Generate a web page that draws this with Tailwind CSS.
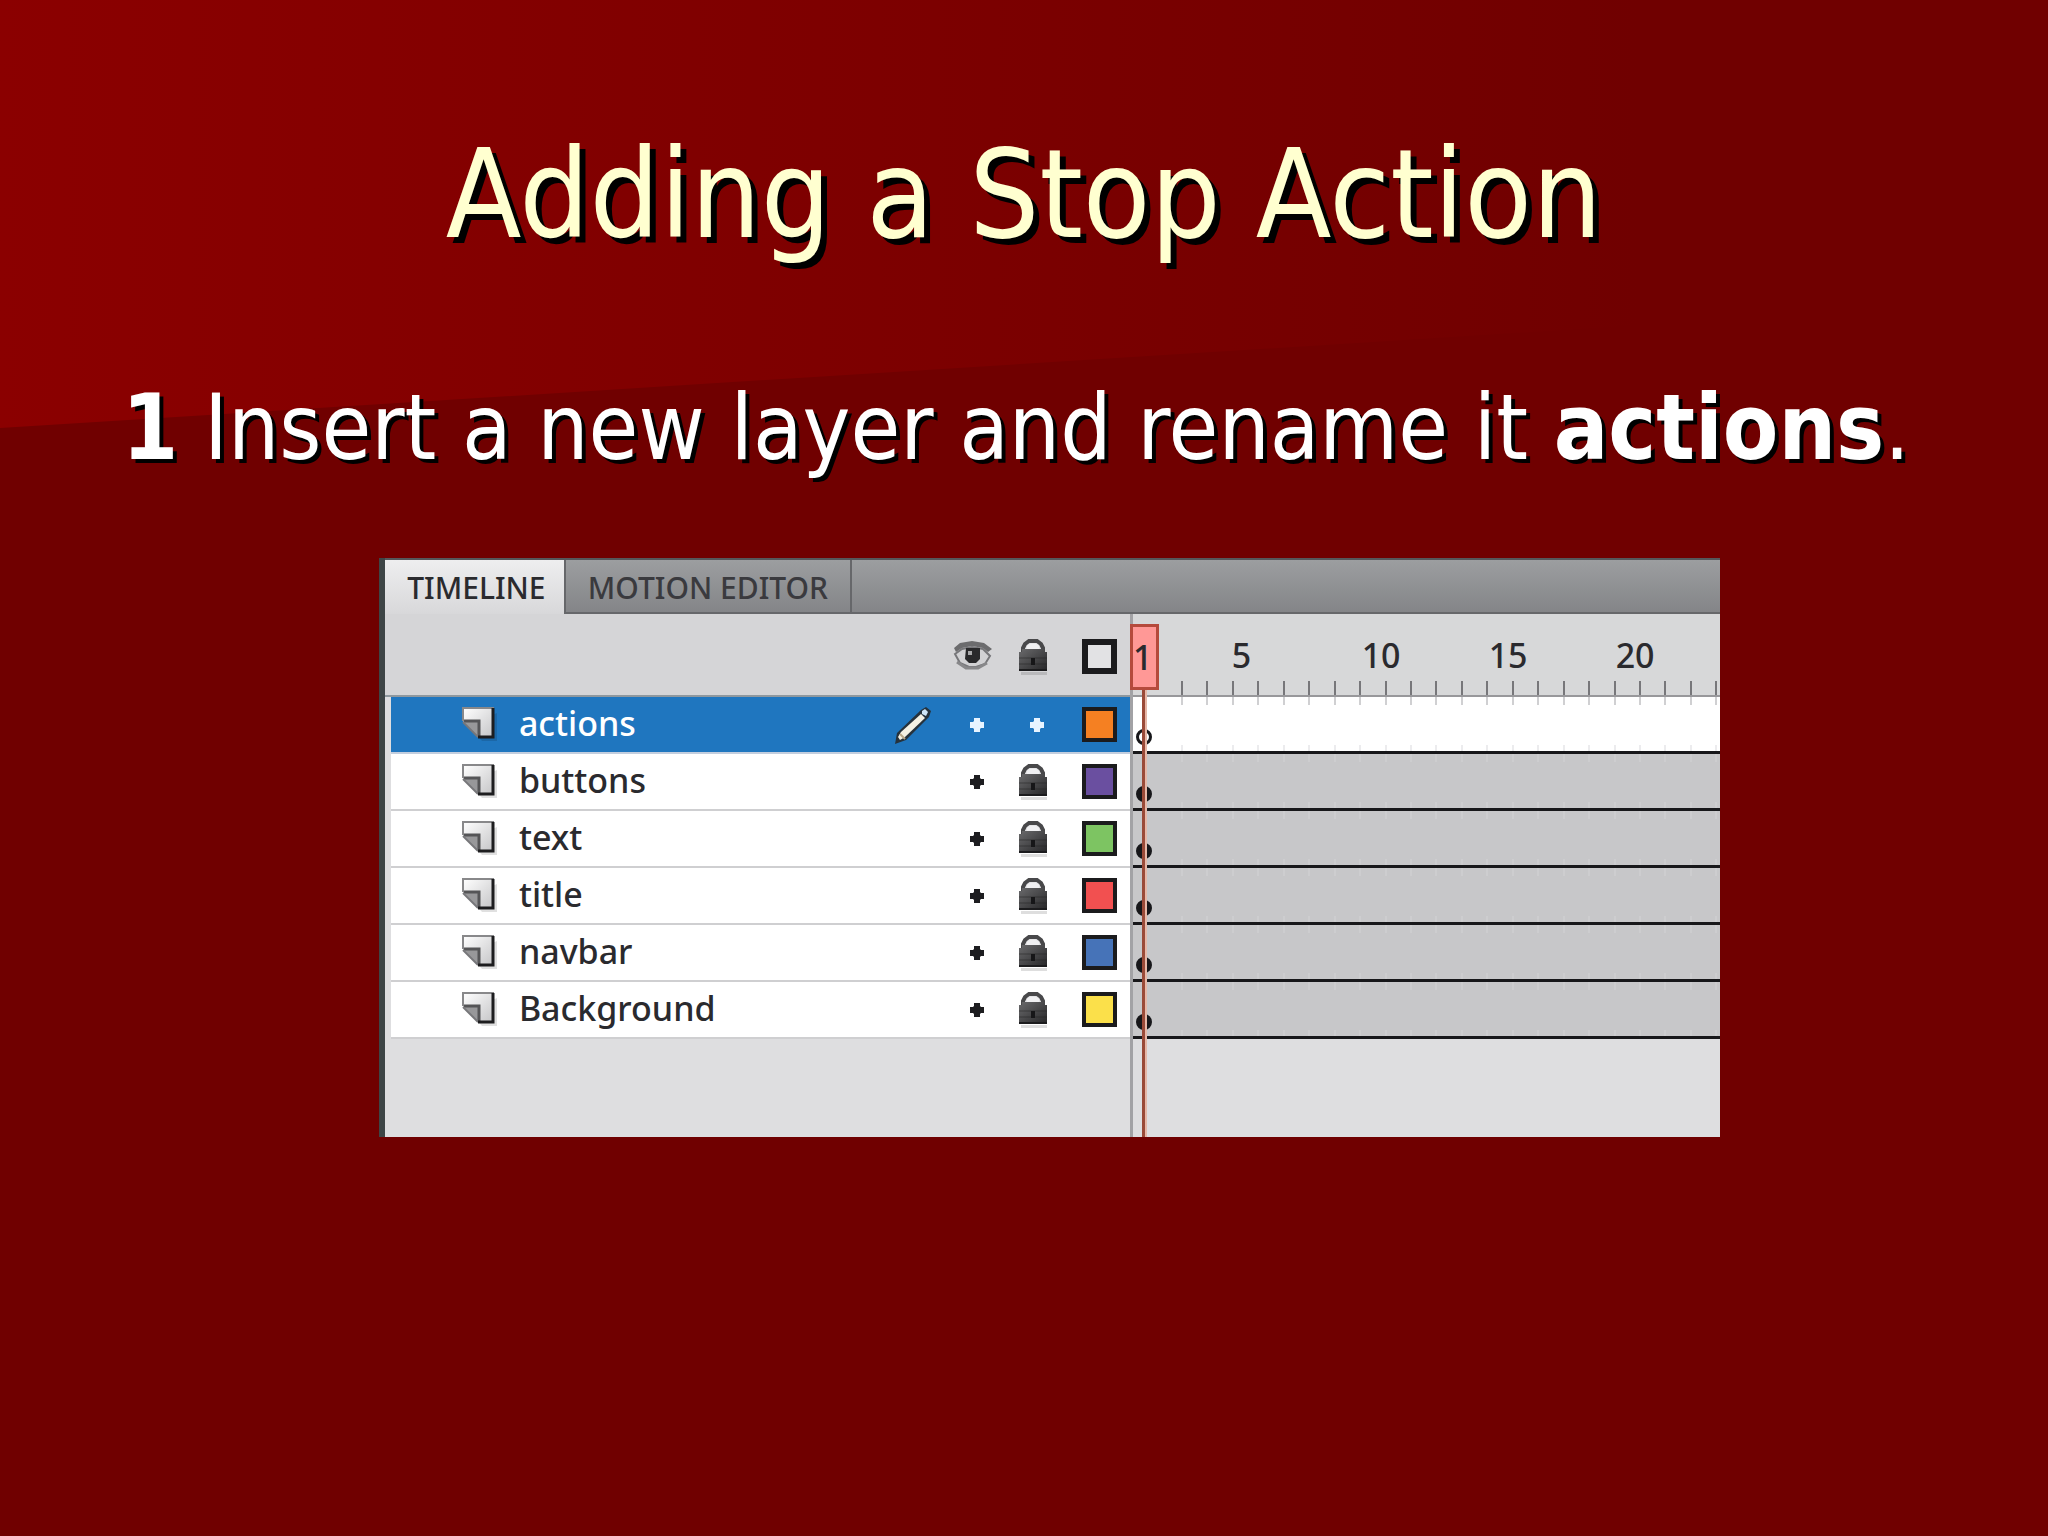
<!DOCTYPE html>
<html lang="en">
<head>
    <meta charset="UTF-8">
    <meta name="viewport" content="width=device-width, initial-scale=1.0">
    <script src="https://cdn.jsdelivr.net/npm/@tailwindcss/browser@4"></script>
    <title>Adding a Stop Action</title>
</head>
<body class="bg-[#700000]">
    <!-- Icons ----------------- -->
    <svg class="absolute size-0" aria-hidden="true">
        <defs>
            <linearGradient id="lock-fill" x1="0" y1="0" x2="1" y2="1">
                <stop offset="0" stop-color="#6a6a6c" />
                <stop offset="1" stop-color="#252527" />
            </linearGradient>
            <linearGradient id="page-fill" x1="0" y1="0" x2="1" y2="1">
                <stop offset="0" stop-color="#ffffff" />
                <stop offset="1" stop-color="#c4c4c6" />
            </linearGradient>
        </defs>
        <symbol id="icon-lock" viewBox="0 0 30 36">
            <path d="M3 33h26v3H3z" fill="#000" opacity=".13" />
            <path d="M5 15V9l2-4 4-3h8l4 3 2 4v6" fill="#e4e4e6" stroke="#48484a" stroke-width="4" />
            <path d="M4 10h22v3h3v19H1V13h3z" fill="url(#lock-fill)" />
            <path d="M9 10V7l3-2h6l3 2v3z" fill="#f0f0f2" />
            <path d="M1 19h28M1 25h28" stroke="#222" stroke-width="1" opacity=".5" />
            <path d="M1 30h28v2H1z" fill="#1c1c1e" />
            <path d="M13 19h4v7h-4z" fill="#161618" />
        </symbol>
        <symbol id="icon-page" viewBox="0 0 36 36">
            <path d="M6 18l14 16h15V6z" fill="#000" opacity=".12" />
            <path d="M1 1h31v30H17L1 14z" fill="url(#page-fill)" />
            <path d="M1 14l16 17V14z" fill="#98989a" />
            <path d="M1 14V1h31" fill="none" stroke="#88888a" stroke-width="2" />
            <path d="M2 14h15v16" fill="none" stroke="#555557" stroke-width="3" />
            <path d="M1 15l15 15" stroke="#77777a" stroke-width="2" />
            <path d="M31 1v29H16" fill="none" stroke="#1d1d1f" stroke-width="3" />
        </symbol>
    </svg>

    <main class="relative min-h-screen overflow-hidden pt-[120px] font-['DejaVu_Sans_Condensed','DejaVu_Sans',sans-serif]">
        <!-- Slide background ----------------- -->
        <div class="absolute inset-x-0 top-0 -z-10 h-[428px] bg-linear-to-r from-[#8b0000] via-[#7e0000] via-40% to-[#700000] to-80% [clip-path:polygon(0_0,100%_0,100%_70%,0_100%)]"></div>

        <h1 class="text-center text-[123px] leading-[150px] whitespace-nowrap text-[#ffffd0] [text-shadow:6px_6px_0_#000]">Adding a Stop Action</h1>
        <p class="mt-[103px] pl-[122px] text-[90px] leading-[110px] whitespace-nowrap text-white [text-shadow:4px_4px_0_#000]"><b>1</b> Insert a new layer and rename it <b>actions</b>.</p>

        <!-- Timeline panel ----------------- -->
        <section class="mt-[75px] ml-[18.5%] w-[65.5%] overflow-hidden border-l-[6px] border-[#3e4546] bg-[#dedee0] font-['Noto_Sans',sans-serif] font-medium text-[#2a2a2e]">
            <div class="flex h-14 border-t-2 border-[#55575a] bg-linear-to-b from-[#9c9ea0] to-[#838487] text-[30px] leading-10">
                <button class="w-[179px] bg-linear-to-b from-[#eeeeef] to-[#d8d8da] pt-[2px] pl-1">TIMELINE</button>
                <button class="w-[288px] border-x-2 border-b-2 border-[#66676a] pt-1 text-[#3a3a3e]">MOTION EDITOR</button>
                <div class="flex-1 border-b-2 border-[#66676a]"></div>
            </div>

            <div class="flex">
                <!-- Layers ----------------- -->
                <div class="w-[748px] shrink-0 border-r-3 border-[#a2a2a5] pl-[6px]">
                    <div class="-ml-[6px] flex h-[83px] items-center justify-end border-b-2 border-[#8f989e] bg-[#d5d5d7] pt-1">
                        <button class="flex w-14 justify-center pr-2" aria-label="Show or hide all layers">
                            <svg class="h-8 w-10" viewBox="0 0 40 32">
                                <path d="M1 7l6-5 12-2 12 2 8 6-4 3-5-4-11-2-10 2-6 4z" fill="#6c6c6e" />
                                <path d="M2 13l7-5 10-2 11 2 7 7-5 8-9 3H16l-9-4z" fill="#d2d2d4" stroke="#77777a" stroke-width="2" />
                                <path d="M13 7h14v11l-4 4h-7l-4-4z" fill="#29292b" />
                                <path d="M15 10h4v4h-4z" fill="#a9a9ab" />
                                <path d="M4 21l9 6h12l9-5" fill="none" stroke="#88888a" stroke-width="3" />
                            </svg>
                        </button>
                        <button class="flex w-14 justify-center" aria-label="Lock all layers">
                            <svg class="h-9 w-[30px]"><use href="#icon-lock" /></svg>
                        </button>
                        <button class="flex w-[69px] justify-end pr-[13px]" aria-label="Show all layers as outlines">
                            <span class="size-[35px] border-[6px] border-[#1b1b1d] bg-[#e2e2e4]"></span>
                        </button>
                    </div>
                    <ul id="layers"></ul>
                    <div class="h-[98px]"></div>
                </div>

                <!-- Frames ----------------- -->
                <div class="relative min-w-0 flex-1">
                    <div class="flex h-[83px] flex-col justify-between border-b-2 border-[#98989b] bg-[#d7d8d9] pt-[18px] text-[34px] leading-[46px]">
                        <div class="flex">
                            <span class="w-[45px] shrink-0"></span>
                            <span class="flex-5 text-center">5</span>
                            <span class="flex-6 text-center">10</span>
                            <span class="flex-4 text-center">15</span>
                            <span class="flex-6 text-center">20</span>
                            <span class="w-[9px] shrink-0"></span>
                        </div>
                        <div class="ticks flex h-[14px] text-[#77777a]"></div>
                    </div>
                    <div id="frames"></div>
                    <!-- playhead -->
                    <div class="absolute top-[10px] -left-[3px] flex h-full w-[29px] flex-col items-center">
                        <span class="h-[66px] w-full shrink-0 border-3 border-[#b54a3c] bg-[#ff9896] pr-1 text-center text-[34px] leading-[60px]">1</span>
                        <span class="w-[5px] flex-1 border-r-2 border-[#e6b8a8] bg-[#9a4a38]"></span>
                    </div>
                </div>
            </div>
        </section>
    </main>

    <script>
        const layers = [
            { name: 'actions', color: '#f58022', active: true },
            { name: 'buttons', color: '#6a4fa0' },
            { name: 'text', color: '#7dc462' },
            { name: 'title', color: '#f25050' },
            { name: 'navbar', color: '#4673b8' },
            { name: 'Background', color: '#fbe04a' },
        ];

        const pencil = `
            <svg class="mr-[17px] h-10 w-[38px]" viewBox="0 0 38 40">
                <path d="M1 39l2-11L27 5l5-3 5 4-2 6L12 35z" fill="#26323c" />
                <path d="M4 32l3-5L27 9l4 4-20 19-5 3z" fill="#f4f1e4" />
                <path d="M28 6l3-2 3 3-2 4-4-2z" fill="#cfe6f7" />
                <path d="M6 29l5 5" stroke="#b9a98a" stroke-width="2" />
            </svg>`;

        const dot = (color) => `<svg class="size-[14px]" viewBox="0 0 14 14"><path d="M4 0h6v3l1 1h3v6h-3l-1 1v3H4v-3l-1-1H0V4h3l1-1z" fill="${color}"/></svg>`;

        // Layer rows
        function layerRow(layer) {
            return `
                <li class="flex h-[57px] items-center border-b-2 ${layer.active ? 'border-[#c3cede] bg-[#1f76bf] text-white' : 'border-[#cfcfd1] bg-white'}">
                    <svg class="ml-[71px] size-9 shrink-0"><use href="#icon-page"/></svg>
                    <span class="ml-[21px] flex-1 pb-1 text-[34px] leading-[46px]">${layer.name}</span>
                    ${layer.active ? pencil : ''}
                    <button class="flex w-14 justify-center" aria-label="Hide ${layer.name}">${dot(layer.active ? '#e8f4ff' : '#1d1d20')}</button>
                    <button class="flex w-14 justify-center" aria-label="Lock ${layer.name}">
                        ${layer.active ? '<span class="pl-2">' + dot('#e8f4ff') + '</span>' : '<svg class="h-9 w-[30px]"><use href="#icon-lock"/></svg>'}
                    </button>
                    <button class="flex w-[69px] justify-end pr-[13px]" aria-label="Outline ${layer.name}">
                        <span class="size-[35px] border-4 border-[#1b1b1d]" style="background-color: ${layer.color}"></span>
                    </button>
                </li>`;
        }

        // Frame rows with their keyframe
        function frameRow(layer) {
            return `
                <div class="flex h-[57px] flex-col justify-between border-b-3 border-[#17171a] ${layer.active ? 'bg-white' : 'bg-[#c7c7c9]'}">
                    <div class="ticks flex h-2 ${layer.active ? 'text-[#d0d0d2]' : 'text-[#cdcdcf]'}"></div>
                    <span class="mt-6 ml-[3px] size-4 rounded-full border-3 border-[#17171a] ${layer.active ? 'bg-white' : 'bg-[#17171a]'}"></span>
                    <div class="ticks flex h-[6px] ${layer.active ? 'text-[#ececee]' : 'text-[#cdcdcf]'}"></div>
                </div>`;
        }

        document.getElementById('layers').innerHTML = layers.map(layerRow).join('');
        document.getElementById('frames').innerHTML = layers.map(frameRow).join('');

        // Ruler ticks
        document.querySelectorAll('.ticks').forEach(function (row) {
            row.innerHTML = '<i class="w-12 shrink-0"></i>' + '<i class="flex-1 border-l-2 border-current"></i>'.repeat(21) + '<i class="w-[5px] border-l-2 border-current"></i>';
        });
    </script>
</body>
</html>
